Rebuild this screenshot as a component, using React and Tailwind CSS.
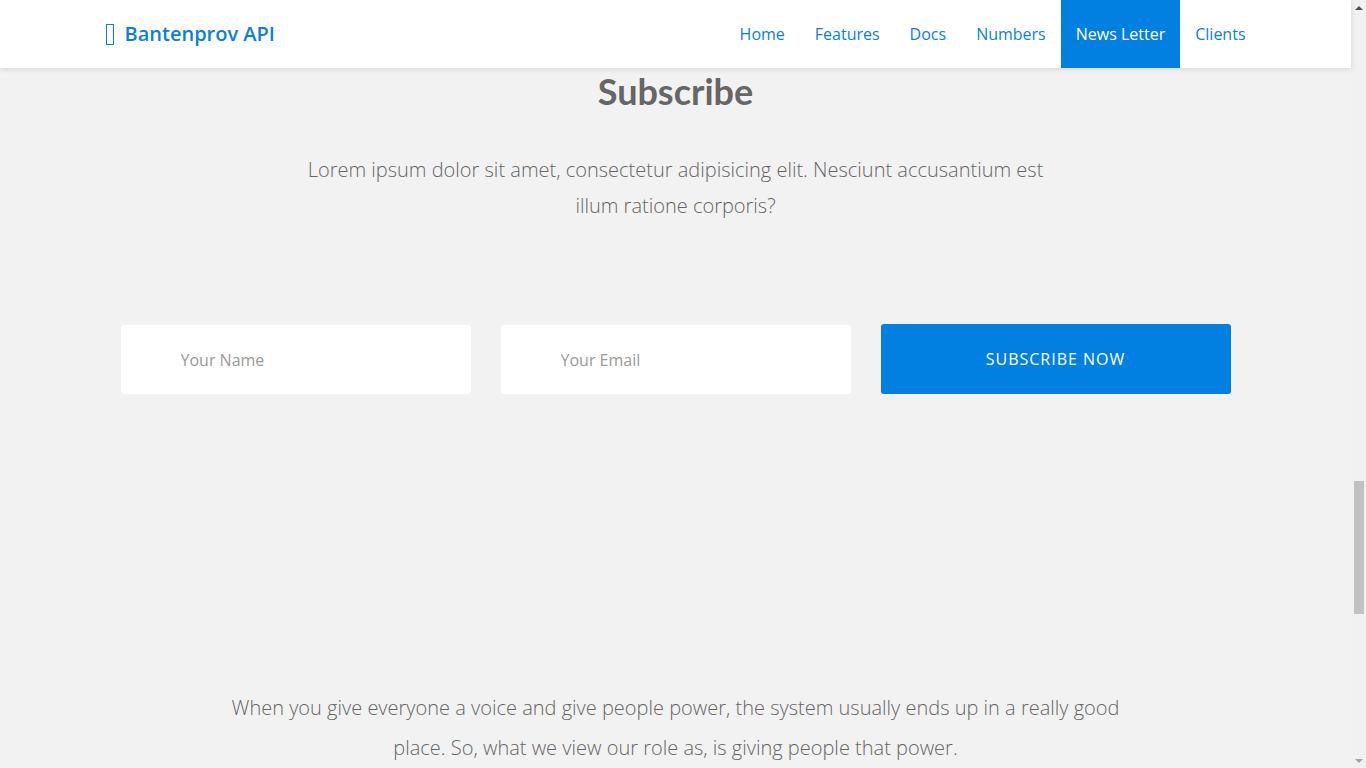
const navItems = ['Home', 'Features', 'Docs', 'Numbers', 'News Letter', 'Clients']

function Navbar() {
  return (
    <nav className="h-[68px] shrink-0 bg-white shadow-[0_1px_6px_rgba(0,0,0,0.12)] relative z-10">
      <div className="w-[1140px] mx-auto h-full flex items-center justify-between">
        <a className="flex items-center text-[20px] font-semibold text-[#0a7fe0]">
          <span className="inline-block w-[8px] h-[21px] border-[1.5px] border-[#0a7fe0] mr-[11px]" />
          Bantenprov API
        </a>
        <ul className="flex h-full mr-[-15px]">
          {navItems.map((item) => (
            <li
              key={item}
              className={
                item === 'News Letter'
                  ? 'h-full flex items-center px-[15px] text-[16px] bg-[#0180e1] text-white'
                  : 'h-full flex items-center px-[15px] text-[16px] text-[#0a7fe0]'
              }
            >
              {item}
            </li>
          ))}
        </ul>
      </div>
    </nav>
  )
}

function Subscribe() {
  return (
    <section className="flex flex-col items-center">
      <h2 className="mt-[2px] font-['Lato',sans-serif] font-bold text-[36px] leading-[1.2] text-[#666]">Subscribe</h2>
      <p className="mt-[39px] w-[750px] text-center text-[20px] leading-[36px] font-light text-[#666]">
        Lorem ipsum dolor sit amet, consectetur adipisicing elit. Nesciunt accusantium est illum ratione corporis?
      </p>
      <form className="mt-[100px] w-[1110px] grid grid-cols-3 gap-[30px] items-end">
        <input
          placeholder="Your Name"
          className="h-[69px] bg-white rounded-[3px] pl-[60px] text-[16px] text-[#555] placeholder:text-[#999] outline-none"
        />
        <input
          placeholder="Your Email"
          className="h-[69px] bg-white rounded-[3px] pl-[60px] text-[16px] text-[#555] placeholder:text-[#999] outline-none"
        />
        <button
          type="button"
          className="h-[70px] bg-[#0180e1] rounded-[3px] text-white text-[16px] tracking-[1px] uppercase"
        >
          Subscribe Now
        </button>
      </form>
      <p className="mt-[294px] w-[900px] text-center text-[20px] leading-[40px] font-light text-[#666]">
        When you give everyone a voice and give people power, the system usually ends up in a really good place. So, what we view our role as, is giving people that power.
      </p>
    </section>
  )
}

function FakeScrollbar() {
  return (
    <div className="w-[15px] shrink-0 bg-[#f1f1f1] flex flex-col items-center">
      <div className="h-[15px] flex items-center justify-center">
        <div className="w-0 h-0 border-l-[4px] border-r-[4px] border-b-[4px] border-l-transparent border-r-transparent border-b-[#505050]" />
      </div>
      <div className="flex-1 w-full flex flex-col items-center pt-[466px]">
        <div className="w-[10px] h-[133px] bg-[#c1c1c1]" />
      </div>
      <div className="h-[15px] flex items-center justify-center">
        <div className="w-0 h-0 border-l-[4px] border-r-[4px] border-t-[4px] border-l-transparent border-r-transparent border-t-[#a3a3a3]" />
      </div>
    </div>
  )
}

export default function App() {
  return (
    <div className="h-screen flex overflow-hidden bg-[#f2f2f2] font-['Open_Sans',sans-serif]">
      <div className="flex-1 min-w-0 flex flex-col">
        <Navbar />
        <Subscribe />
      </div>
      <FakeScrollbar />
    </div>
  )
}
